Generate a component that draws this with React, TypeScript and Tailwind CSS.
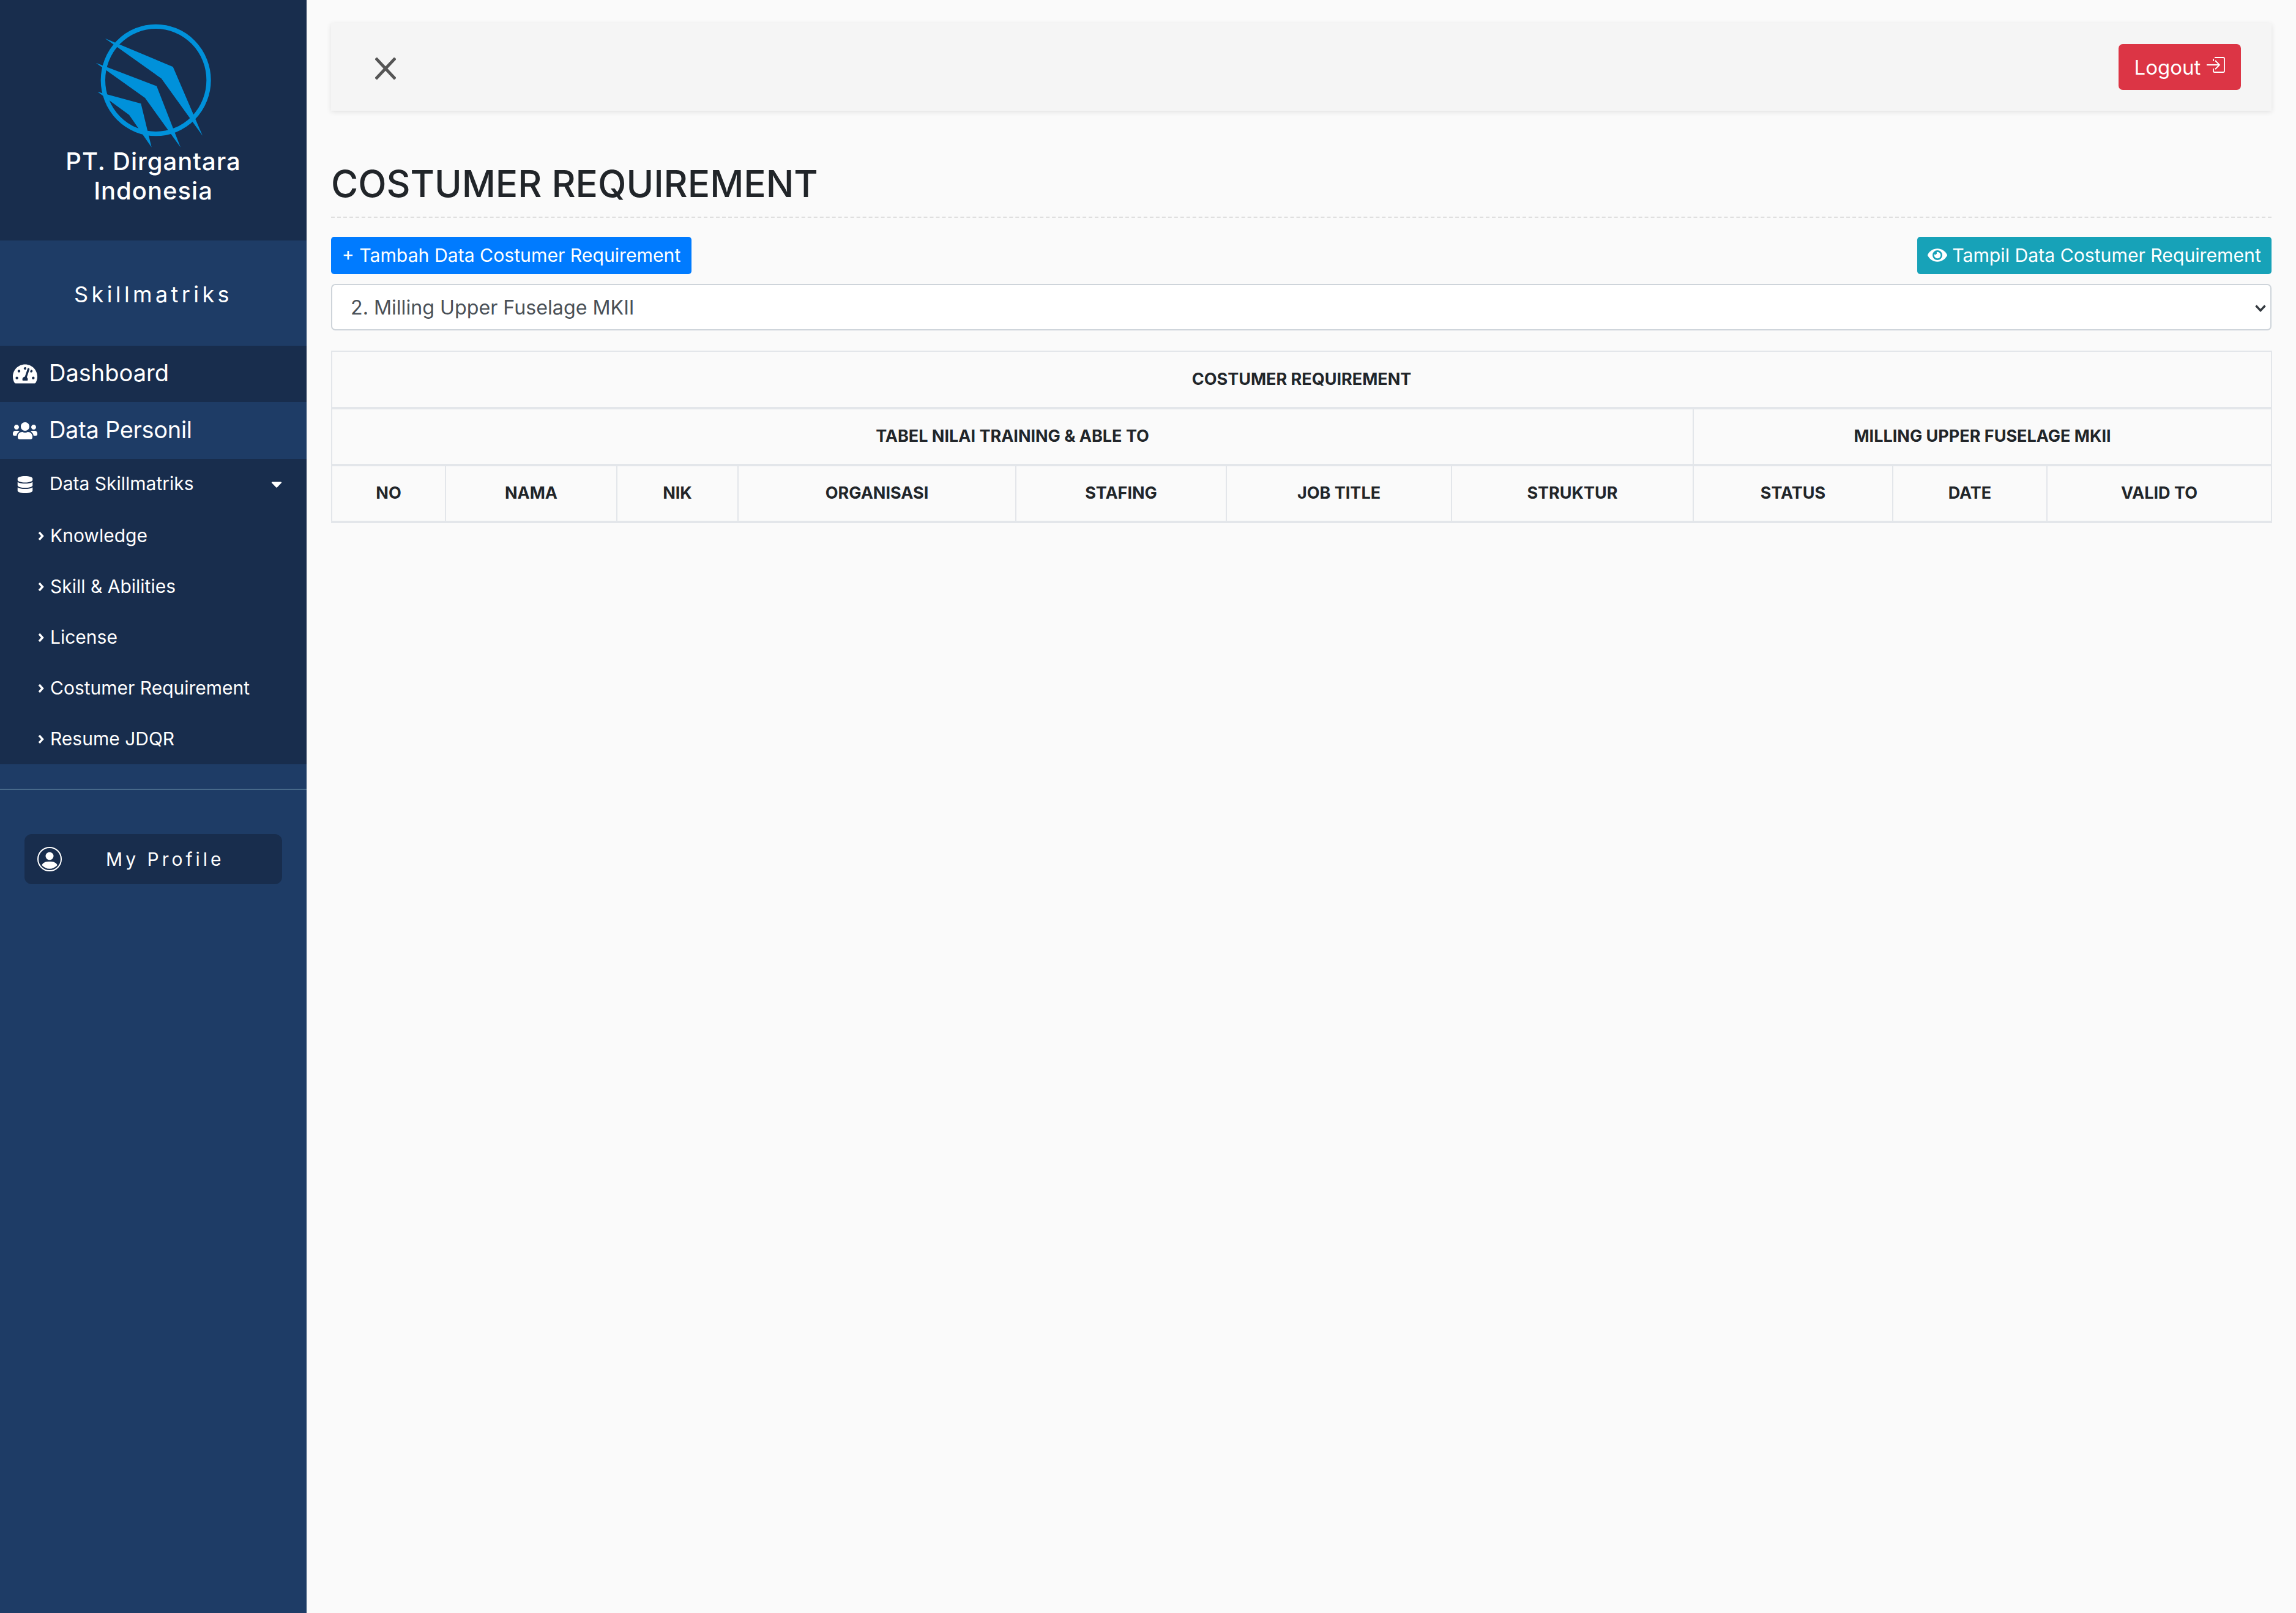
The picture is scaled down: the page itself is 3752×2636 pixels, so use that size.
import { FaCaretDown, FaDatabase, FaEye, FaTachometerAlt, FaUsers } from "react-icons/fa";

const subMenu = ["Knowledge", "Skill & Abilities", "License", "Costumer Requirement", "Resume JDQR"];

const columns = [
  { label: "NO", width: "w-[186px]" },
  { label: "NAMA", width: "w-[280px]" },
  { label: "NIK", width: "w-[198px]" },
  { label: "ORGANISASI", width: "w-[454px]" },
  { label: "STAFING", width: "w-[344px]" },
  { label: "JOB TITLE", width: "w-[368px]" },
  { label: "STRUKTUR", width: "w-[395px]" },
  { label: "STATUS", width: "w-[326px]" },
  { label: "DATE", width: "w-[252px]" },
  { label: "VALID TO", width: "w-[367px]" },
];

const thClass = "h-[93px] border-2 border-b-[4px] border-[#e3e6ea] p-0 text-center align-middle text-[27px] font-bold text-[#212529]";

function Logo() {
  return (
    <svg viewBox="0 0 720 690" className="h-[230px] w-[240px] shrink-0" fill="#0091da">
      <ellipse cx="371" cy="333" rx="259" ry="263" fill="none" stroke="#0091da" strokeWidth="22" />
      <polygon points="122,128 455,268 600,605 398,325" />
      <polygon points="77,248 375,362 492,662 318,420" />
      <polygon points="85,390 298,448 350,662 240,503" />
    </svg>
  );
}

function Sidebar() {
  return (
    <aside className="w-[501px] shrink-0 bg-[#1e3c66] text-white">
      <div className="flex h-[393px] flex-col items-center bg-[#182d4d] pt-[20px]">
        <Logo />
        <div className="-mt-[10px] text-center text-[40px] leading-[48px] font-medium tracking-[1px]">
          PT. Dirgantara
          <br />
          Indonesia
        </div>
      </div>
      <div className="flex h-[172px] items-center justify-center pt-[3px] text-[36px] tracking-[5.4px]">Skillmatriks</div>
      <nav>
        <div className="flex h-[92px] items-center bg-[#182d4d] pb-[3px] pl-[21px] text-[38px]">
          <FaTachometerAlt className="mt-[3px] mr-[19px] h-[40px] w-[40px]" />
          Dashboard
        </div>
        <div className="flex h-[93px] items-center pb-[2px] pl-[21px] text-[38px] tracking-[-0.3px]">
          <FaUsers className="mt-[2px] mr-[19px] h-[40px] w-[40px]" />
          Data Personil
        </div>
        <div className="bg-[#182d4d]">
          <div className="flex h-[84px] items-center pr-[40px] pb-[3px] pl-[28px] text-[30px]">
            <FaDatabase className="mt-[3px] mr-[27px] h-[28px] w-[26px]" />
            <span className="flex-1">Data Skillmatriks</span>
            <FaCaretDown className="h-[28px] w-[18px]" />
          </div>
          {subMenu.map((item) => (
            <div key={item} className="flex h-[83px] items-center pl-[62px] text-[30px]">
              <svg viewBox="0 0 10 16" className="mr-[10px] h-[16px] w-[10px]" fill="none" stroke="currentColor" strokeWidth="3.4">
                <path d="M2 2l5.5 6L2 14" />
              </svg>
              {item}
            </div>
          ))}
        </div>
        <div className="mt-[40px] h-[2px] bg-[#47698a]" />
        <div className="mx-[40px] mt-[72px] flex h-[82px] items-center rounded-[12px] bg-[#182d4d] pl-[21px] text-[30px] tracking-[5px]">
          <svg viewBox="0 0 40 40" className="h-[40px] w-[40px]" fill="currentColor">
            <circle cx="20" cy="20" r="19" fill="none" stroke="currentColor" strokeWidth="2" />
            <circle cx="20" cy="15" r="6.5" />
            <path d="M7.5 30C9 25 14 24 20 24s11 1 12.5 6A16.5 16.5 0 0 1 7.5 30Z" />
          </svg>
          <span className="ml-[72px]">My Profile</span>
        </div>
      </nav>
    </aside>
  );
}

export default function App() {
  return (
    <div className="flex min-h-screen bg-[#fafafa] font-['Inter','Liberation_Sans',sans-serif]">
      <Sidebar />
      <main className="min-w-0 flex-1 pt-[38px] pr-[40px] pl-[40px]">
        <header className="flex h-[143px] items-center justify-between bg-[#f5f5f5] pr-[50px] pl-[72px] shadow-[0_2px_8px_rgb(0_0_0/0.1)]">
          <svg viewBox="0 0 34 36" className="mt-[4px] h-[36px] w-[34px]" stroke="#555555" strokeWidth="5" fill="none">
            <path d="M1 1 33 35M33 1 1 35" />
          </svg>
          <button className="flex h-[75px] w-[200px] items-center justify-center rounded-[7px] bg-[#dc3545] text-[33px] text-white">
            <span className="mt-[2px]">Logout</span>
            <svg viewBox="0 0 30 26" className="mb-[8px] ml-[10px] h-[26px] w-[30px]" stroke="currentColor" strokeWidth="1.8" fill="none">
              <path d="M13 1h14a2 2 0 0 1 2 2v20a2 2 0 0 1-2 2H13a2 2 0 0 1-2-2v-4M11 7V3" />
              <path d="M0 13h21M14 6l7 7-7 7" />
            </svg>
          </button>
        </header>

        <h1 className="mt-[89px] border-b-2 border-dashed border-[#dfdfdf] pb-[24px] text-[60.4px] leading-[60px] font-medium text-[#212529]">
          COSTUMER REQUIREMENT
        </h1>

        <div className="mt-[31px] flex items-center justify-between">
          <button className="flex h-[61px] w-[589px] items-center justify-center rounded-[5px] bg-[#007bff] text-[30.2px] text-white">
            + Tambah Data Costumer Requirement
          </button>
          <button className="flex h-[61px] w-[579px] items-center justify-center rounded-[5px] bg-[#17a2b8] text-[30.2px] text-white">
            <FaEye className="mr-[8px] mb-[2px] h-[32px] w-[32px]" />
            Tampil Data Costumer Requirement
          </button>
        </div>

        <div className="relative mt-[16px]">
          <select className="block h-[76px] w-full appearance-none rounded-[7px] border-2 border-[#ced4da] bg-white pt-[2px] pl-[30px] text-[32.2px] text-[#495057]" defaultValue="2">
            <option value="2">2. Milling Upper Fuselage MKII</option>
          </select>
          <svg viewBox="0 0 18 12" className="pointer-events-none absolute top-[34px] right-[9px] h-[12px] w-[18px]" fill="none" stroke="#343a40" strokeWidth="3.4">
            <path d="M1.5 1.5 9 9.5l7.5-8" />
          </svg>
        </div>

        <table className="mt-[33px] w-[3170px] table-fixed border-collapse">
          <colgroup>
            {columns.map((col) => (
              <col key={col.label} className={col.width} />
            ))}
          </colgroup>
          <thead>
            <tr>
              <th colSpan={10} className={thClass}>
                COSTUMER REQUIREMENT
              </th>
            </tr>
            <tr>
              <th colSpan={7} className={thClass}>
                TABEL NILAI TRAINING &amp; ABLE TO
              </th>
              <th colSpan={3} className={thClass}>
                MILLING UPPER FUSELAGE MKII
              </th>
            </tr>
            <tr>
              {columns.map((col) => (
                <th key={col.label} className={thClass}>
                  {col.label}
                </th>
              ))}
            </tr>
          </thead>
        </table>
      </main>
    </div>
  );
}
